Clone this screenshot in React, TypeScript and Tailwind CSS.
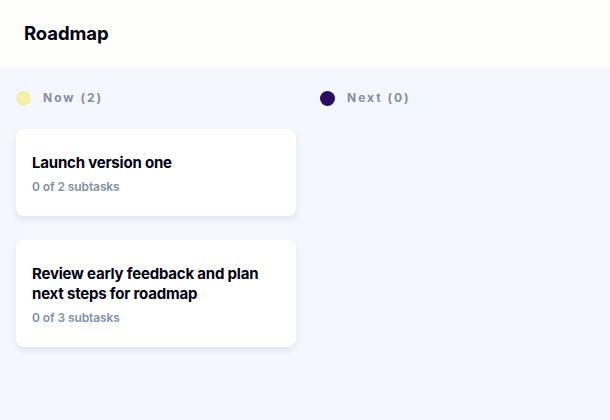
import React from 'react';

type Task = { id: number; title: string; done: number; total: number };
type Column = { name: string; dot: string; tasks: Task[] };

const columns: Column[] = [
  {
    name: 'Now',
    dot: 'bg-[#f6efa6]',
    tasks: [
      { id: 1, title: 'Launch version one', done: 0, total: 2 },
      { id: 2, title: 'Review early feedback and plan next steps for roadmap', done: 0, total: 3 },
    ],
  },
  { name: 'Next', dot: 'bg-[#2a0e61]', tasks: [] },
];

export default function App() {
  return (
    <div className="w-[610px] h-[420px] flex flex-col bg-[#f4f7fd] font-['Inter','Noto_Sans',sans-serif] overflow-hidden">
      <header className="h-[67px] shrink-0 bg-[#fefefd] flex items-center px-6">
        <h1 className="text-[18.5px] font-bold text-[#000112] tracking-[-0.1px]">Roadmap</h1>
      </header>

      <div className="flex gap-6 px-4 pt-[22px]">
        {columns.map(col => (
          <div key={col.name} className="w-[280px] shrink-0">
            <div className="flex items-center gap-3 h-[18px] mb-[22px]">
              <span className={`w-[15px] h-[15px] rounded-full ${col.dot}`} />
              <span className="text-[12px] font-bold tracking-[2px] text-[#828fa3]">
                {col.name} ({col.tasks.length})
              </span>
            </div>
            <div className="flex flex-col gap-6">
              {col.tasks.map(t => (
                <div
                  key={t.id}
                  className="bg-white rounded-lg px-4 pt-6 pb-[21px] shadow-[0_4px_6px_rgba(54,78,126,0.10)]"
                >
                  <h3 className="text-[15px] font-bold text-[#000112] leading-[20px] tracking-[-0.2px]">{t.title}</h3>
                  <p className="mt-[6px] text-[12px] leading-4 font-semibold text-[#828fa3] tracking-[-0.1px]">
                    {t.done} of {t.total} subtasks
                  </p>
                </div>
              ))}
            </div>
          </div>
        ))}
      </div>
    </div>
  );
}
